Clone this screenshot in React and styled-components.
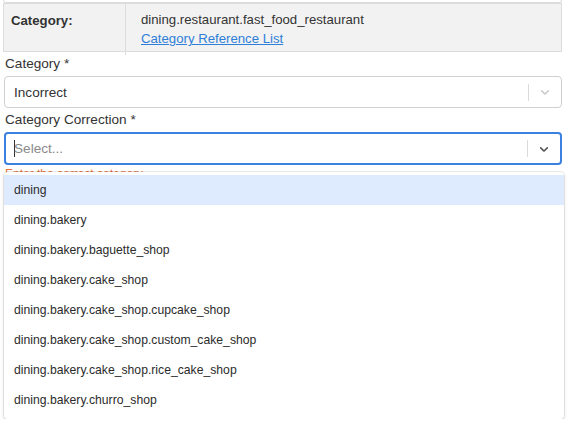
import React from "react";
import styled, { createGlobalStyle } from "styled-components";

const GlobalStyle = createGlobalStyle`
  body {
    margin: 0;
    background: #fff;
    font-family: "Liberation Sans", Arial, sans-serif;
    color: #333;
  }
`;

const options = [
  "dining",
  "dining.bakery",
  "dining.bakery.baguette_shop",
  "dining.bakery.cake_shop",
  "dining.bakery.cake_shop.cupcake_shop",
  "dining.bakery.cake_shop.custom_cake_shop",
  "dining.bakery.cake_shop.rice_cake_shop",
  "dining.bakery.churro_shop",
];

const Chevron = ({ color }) => (
  <svg width="14" height="14" viewBox="0 0 20 20" fill={color}>
    <path d="M4.516 7.548c0.436-0.446 1.043-0.481 1.576 0l3.908 3.747 3.908-3.747c0.533-0.481 1.141-0.446 1.574 0 0.436 0.445 0.408 1.197 0 1.615-0.406 0.418-4.695 4.502-4.695 4.502-0.217 0.223-0.502 0.335-0.787 0.335s-0.57-0.112-0.789-0.335c0 0-4.287-4.084-4.695-4.502s-0.436-1.17 0-1.615z" />
  </svg>
);

const App = () => {
  return (
    <Page>
      <GlobalStyle />
      <TopCard />
      <InfoTable>
        <KeyCell>Category:</KeyCell>
        <ValueCell>
          <span>dining.restaurant.fast_food_restaurant</span>
          <RefLink href="#">Category Reference List</RefLink>
        </ValueCell>
      </InfoTable>

      <Label>Category *</Label>
      <Control>
        <Value>Incorrect</Value>
        <Indicators>
          <Separator />
          <IndicatorBox>
            <Chevron color="#cccccc" />
          </IndicatorBox>
        </Indicators>
      </Control>

      <Label>Category Correction *</Label>
      <SelectWrap>
        <Control $focused>
          <Value $placeholder>
            <Caret />
            Select...
          </Value>
          <Indicators>
            <Separator />
            <IndicatorBox>
              <Chevron color="#555555" />
            </IndicatorBox>
          </Indicators>
        </Control>
        <ErrorText>Enter the correct category</ErrorText>
      </SelectWrap>
      <Menu>
        {options.map((o, i) => (
          <Option key={o} $active={i === 0}>
            {o}
          </Option>
        ))}
      </Menu>
    </Page>
  );
};

export default App;

const Page = styled.div`
  padding: 0 8px 0 4px;
  width: 558px;
`;

const TopCard = styled.div`
  height: 2px;
  margin: 0 0 0 -1px;
  border: 1px solid #dcdcdc;
  border-top: none;
  border-radius: 0 0 3px 3px;
`;

const InfoTable = styled.div`
  display: grid;
  grid-template-columns: 122px 1fr;
  margin-left: -1px;
  background: #f2f2f2;
  border: 1px solid #dcdcdc;
  height: 49px;
  box-sizing: border-box;
  font-size: 13.2px;
`;

const KeyCell = styled.div`
  padding: 9px 7px;
  font-weight: bold;
  color: #333;
  border-right: 1px solid #dcdcdc;
`;

const ValueCell = styled.div`
  display: flex;
  flex-direction: column;
  padding: 8px 15px;
  gap: 3px;
  line-height: 16px;
  color: #333;
`;

const RefLink = styled.a`
  color: #2f7fd8;
  text-decoration: underline;
`;

const Label = styled.div`
  font-size: 13.6px;
  line-height: 20px;
  padding: 2px 1px 2px;
  color: #333;
`;

const SelectWrap = styled.div`
  position: relative;
`;

const Control = styled.div`
  display: flex;
  align-items: center;
  height: ${(p) => (p.$focused ? "33px" : "32px")};
  box-sizing: border-box;
  border: ${(p) => (p.$focused ? "2px solid #3b82e0" : "1px solid #d0d0d0")};
  border-radius: 4px;
  padding-left: ${(p) => (p.$focused ? "8px" : "9px")};
  background: #fff;
`;

const Value = styled.div`
  flex: 1;
  display: flex;
  align-items: center;
  font-size: 13.6px;
  color: ${(p) => (p.$placeholder ? "#8a8a8a" : "#333")};
`;

const Caret = styled.span`
  display: inline-block;
  width: 1px;
  height: 17px;
  background: #333;
  margin-right: -1px;
`;

const Indicators = styled.div`
  display: flex;
  align-items: center;
  height: 100%;
`;

const Separator = styled.span`
  width: 1px;
  height: 17px;
  background: #dadada;
`;

const IndicatorBox = styled.div`
  width: 32px;
  display: flex;
  justify-content: center;
  align-items: center;
`;

const ErrorText = styled.div`
  position: absolute;
  top: 100%;
  left: 1px;
  font-size: 12px;
  color: #e8743b;
  padding-top: 2px;
  line-height: 14px;
`;

const Menu = styled.div`
  position: relative;
  z-index: 1;
  margin-top: 7px;
  margin-right: -2px;
  background: #fff;
  border-radius: 4px;
  padding: 3px 0 4px;
  box-shadow: 0 0 0 1px rgba(0, 0, 0, 0.08), 0 2px 4px rgba(0, 0, 0, 0.12);
`;

const Option = styled.div`
  height: 30px;
  display: flex;
  align-items: center;
  padding-left: 10px;
  font-size: 12.2px;
  color: #2b2b2b;
  background: ${(p) => (p.$active ? "#deebff" : "#fff")};
`;
